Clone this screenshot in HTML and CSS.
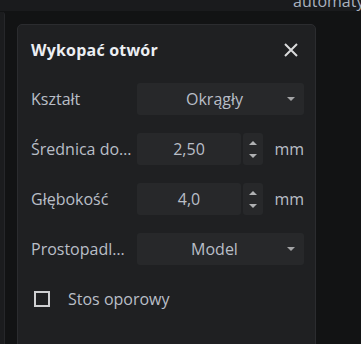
FILE: index.html
```html
<!DOCTYPE html>
<html>
<head>
    <title>Wykopać otwór</title>
    <link rel="stylesheet" href="styles.css">
</head>
<body>
    <!-- Top toolbar, mostly cut off -->
    <div class="top-bar">
        <span class="top-text">automatyczne</span>
    </div>

    <div class="workspace">
        <div class="side-panel"></div>

        <div class="dialog">
            <div class="dialog-header">
                <h3>Wykopać otwór</h3>
                <button class="close-button" title="Zamknij">
                    <svg viewBox="0 0 14 14">
                        <path d="M1 1L13 13M13 1L1 13"/>
                    </svg>
                </button>
            </div>

            <div class="row">
                <div class="label">Kształt</div>
                <div class="select">
                    <span>Okrągły</span>
                    <i class="caret"></i>
                </div>
            </div>

            <div class="row">
                <div class="label">Średnica dolna</div>
                <div class="number-input">2,50</div>
                <div class="spinner"><i class="up"></i><i class="down"></i></div>
                <div class="unit">mm</div>
            </div>

            <div class="row">
                <div class="label">Głębokość</div>
                <div class="number-input">4,0</div>
                <div class="spinner"><i class="up"></i><i class="down"></i></div>
                <div class="unit">mm</div>
            </div>

            <div class="row">
                <div class="label">Prostopadle do</div>
                <div class="select">
                    <span>Model</span>
                    <i class="caret"></i>
                </div>
            </div>

            <label class="checkbox-row">
                <span class="checkbox"></span>
                Stos oporowy
            </label>
        </div>
    </div>
</body>
</html>
```

FILE: styles.css
```css
body {
    margin: 0;
    width: 361px;
    height: 344px;
    overflow: hidden;
    background-color: #121314;
    font-family: "Open Sans", "Noto Sans", sans-serif;
    color: #b9bec7;
}
.top-bar {
    height: 11px;
    background-color: #1a1b1d;
    overflow: hidden;
}
.top-text {
    display: block;
    margin-top: -8px;
    padding-left: 293px;
    font-size: 16px;
    line-height: 18px;
    white-space: nowrap;
    color: #a9b1bf;
}
.workspace {
    display: flex;
    padding-top: 1px;
}
.side-panel {
    width: 4px;
    height: 340px;
    background-color: #1b1c1e;
    border-right: 1px solid #26272a;
    border-top-right-radius: 3px;
}
.dialog {
    width: 273px;
    height: 330px;
    margin-top: 12px;
    margin-left: 12px;
    padding: 0 11px 0 13px;
    background-color: #1f2022;
    border: 1px solid #2b2c2f;
    border-radius: 5px;
}
.dialog-header {
    display: flex;
    align-items: center;
    justify-content: space-between;
    height: 48px;
    margin-top: 1px;
    margin-bottom: 9px;
}
h3 {
    margin: 0;
    font-size: 16px;
    font-weight: bold;
    letter-spacing: 0.2px;
    color: #eceef2;
}
.close-button {
    width: 20px;
    height: 20px;
    padding: 0;
    margin-right: 3px;
    border: none;
    background: none;
    display: flex;
    align-items: center;
    justify-content: center;
}
.close-button svg {
    width: 14px;
    height: 14px;
    stroke: #d9dadc;
    stroke-width: 2;
}
.row {
    display: flex;
    align-items: center;
    height: 32px;
    margin-bottom: 18px;
    font-size: 16px;
}
.label {
    width: 102px;
    margin-right: 4px;
    white-space: nowrap;
    overflow: hidden;
    text-overflow: ellipsis;
}
.select {
    flex: 1;
    height: 32px;
    position: relative;
    display: flex;
    align-items: center;
    justify-content: center;
    background-color: #27282a;
    border-radius: 3px;
}
.select span {
    margin-left: -12px;
}
/* Dropdown arrow */
.caret {
    position: absolute;
    right: 9px;
    top: 14px;
    border-left: 4px solid transparent;
    border-right: 4px solid transparent;
    border-top: 4px solid #a3a4a6;
}
.number-input {
    width: 104px;
    height: 32px;
    display: flex;
    align-items: center;
    justify-content: center;
    background-color: #27282a;
    border-radius: 3px;
}
.spinner {
    width: 20px;
    height: 32px;
    margin-left: 2px;
    display: flex;
    flex-direction: column;
    align-items: center;
    justify-content: center;
    gap: 9px;
    background-color: #27282a;
    border-radius: 3px;
}
.spinner .up {
    border-left: 4px solid transparent;
    border-right: 4px solid transparent;
    border-bottom: 4px solid #b0b1b3;
}
.spinner .down {
    border-left: 4px solid transparent;
    border-right: 4px solid transparent;
    border-top: 4px solid #b0b1b3;
}
.unit {
    flex: 1;
    text-align: right;
    color: #b9bec7;
}
.checkbox-row {
    display: flex;
    align-items: center;
    height: 32px;
    font-size: 16px;
}
.checkbox {
    width: 12px;
    height: 12px;
    margin-left: 3px;
    margin-right: 18px;
    border: 2px solid #cfd0d2;
}
```
